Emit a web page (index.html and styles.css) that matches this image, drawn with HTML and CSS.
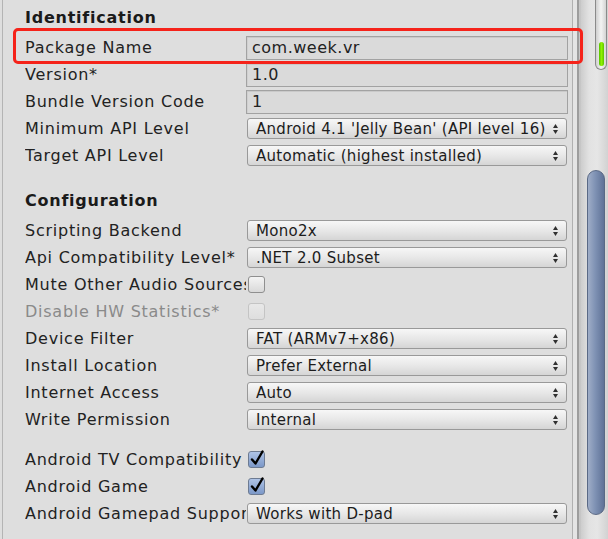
FILE: index.html
```html
<!DOCTYPE html>
<html>
<head>
<meta charset="utf-8">
<link rel="stylesheet" href="styles.css">
</head>
<body>
<div class="window">
  <div class="panel">
    <section class="group">
      <div class="heading">Identification</div>
      <div class="row"><span class="label">Package Name</span><span class="text-field">com.week.vr</span></div>
      <div class="row"><span class="label">Version*</span><span class="text-field">1.0</span></div>
      <div class="row"><span class="label">Bundle Version Code</span><span class="text-field">1</span></div>
      <div class="row"><span class="label">Minimum API Level</span><span class="popup"><span class="popup-text">Android 4.1 'Jelly Bean' (API level 16)</span><svg class="arrows" width="5" height="10" viewBox="0 0 5 10"><path d="M2.5 0L5 4H0Z M0 6H5L2.5 10Z"/></svg></span></div>
      <div class="row"><span class="label">Target API Level</span><span class="popup"><span class="popup-text">Automatic (highest installed)</span><svg class="arrows" width="5" height="10" viewBox="0 0 5 10"><path d="M2.5 0L5 4H0Z M0 6H5L2.5 10Z"/></svg></span></div>
    </section>
    <section class="group config">
      <div class="heading">Configuration</div>
      <div class="row"><span class="label">Scripting Backend</span><span class="popup"><span class="popup-text">Mono2x</span><svg class="arrows" width="5" height="10" viewBox="0 0 5 10"><path d="M2.5 0L5 4H0Z M0 6H5L2.5 10Z"/></svg></span></div>
      <div class="row"><span class="label">Api Compatibility Level*</span><span class="popup"><span class="popup-text">.NET 2.0 Subset</span><svg class="arrows" width="5" height="10" viewBox="0 0 5 10"><path d="M2.5 0L5 4H0Z M0 6H5L2.5 10Z"/></svg></span></div>
      <div class="row"><span class="label">Mute Other Audio Sources</span><span class="checkbox"></span></div>
      <div class="row disabled"><span class="label">Disable HW Statistics*</span><span class="checkbox"></span></div>
      <div class="row"><span class="label">Device Filter</span><span class="popup"><span class="popup-text">FAT (ARMv7+x86)</span><svg class="arrows" width="5" height="10" viewBox="0 0 5 10"><path d="M2.5 0L5 4H0Z M0 6H5L2.5 10Z"/></svg></span></div>
      <div class="row"><span class="label">Install Location</span><span class="popup"><span class="popup-text">Prefer External</span><svg class="arrows" width="5" height="10" viewBox="0 0 5 10"><path d="M2.5 0L5 4H0Z M0 6H5L2.5 10Z"/></svg></span></div>
      <div class="row"><span class="label">Internet Access</span><span class="popup"><span class="popup-text">Auto</span><svg class="arrows" width="5" height="10" viewBox="0 0 5 10"><path d="M2.5 0L5 4H0Z M0 6H5L2.5 10Z"/></svg></span></div>
      <div class="row"><span class="label">Write Permission</span><span class="popup"><span class="popup-text">Internal</span><svg class="arrows" width="5" height="10" viewBox="0 0 5 10"><path d="M2.5 0L5 4H0Z M0 6H5L2.5 10Z"/></svg></span></div>
    </section>
    <section class="group tv">
      <div class="row"><span class="label">Android TV Compatibility</span><span class="checkbox checked"><svg class="tick" width="16" height="18" viewBox="0 0 16 18"><path d="M3 10.5L6.5 14.5L13.5 2.5"/></svg></span></div>
      <div class="row"><span class="label">Android Game</span><span class="checkbox checked"><svg class="tick" width="16" height="18" viewBox="0 0 16 18"><path d="M3 10.5L6.5 14.5L13.5 2.5"/></svg></span></div>
      <div class="row"><span class="label">Android Gamepad Support Level</span><span class="popup"><span class="popup-text">Works with D-pad</span><svg class="arrows" width="5" height="10" viewBox="0 0 5 10"><path d="M2.5 0L5 4H0Z M0 6H5L2.5 10Z"/></svg></span></div>
    </section>
  </div>
  <div class="divider"></div>
  <div class="scrollbar">
    <div class="meter"><div class="meter-fill"></div></div>
    <div class="thumb"></div>
  </div>
  <div class="highlight"></div>
</div>
</body>
</html>
```
FILE: styles.css
```css
html, body {
  margin: 0;
  padding: 0;
}
body {
  font-family: "DejaVu Sans", "Liberation Sans", sans-serif;
  color: #222222;
}
.window {
  position: relative;
  display: flex;
  width: 608px;
  height: 539px;
  background: #dedede;
  overflow: hidden;
}
.panel {
  box-sizing: border-box;
  width: 571px;
  flex: none;
  margin-left: 2px;
  border-left: 1px solid #b4b4b4;
  border-right: 1px solid #b0b0b0;
  padding: 4px 4px 0 22px;
}
.group {
  display: flex;
  flex-direction: column;
}
.config {
  margin-top: 18px;
}
.tv {
  margin-top: 13px;
}
.heading {
  height: 27px;
  line-height: 27px;
  margin-bottom: 3px;
  font-size: 16px;
  font-weight: bold;
  letter-spacing: 0.75px;
  color: #1a1a1a;
}
.row {
  display: flex;
  align-items: center;
  height: 27px;
}
.label {
  flex: none;
  width: 221px;
  overflow: hidden;
  white-space: nowrap;
  line-height: 27px;
  font-size: 16px;
  letter-spacing: 0.75px;
}
.disabled .label {
  color: #8a8a8a;
}
.text-field {
  flex: 1;
  box-sizing: border-box;
  height: 24px;
  border: 1px solid #a2a2a2;
  background: #dadada;
  box-shadow: inset 0 1px 0 #c9c9c9, inset 1px 0 0 #d0d0d0;
  padding-left: 5px;
  line-height: 22px;
  font-size: 16px;
  letter-spacing: 0.5px;
  white-space: nowrap;
}
.popup {
  flex: 1;
  display: flex;
  align-items: center;
  box-sizing: border-box;
  height: 21px;
  margin: 0 1px;
  border: 1px solid #999999;
  border-radius: 3px;
  background: linear-gradient(#f7f7f7, #e6e6e6 55%, #d5d5d5);
  padding: 0 8px;
  font-size: 15px;
  letter-spacing: 0.3px;
  color: #1c1c1c;
}
.popup-text {
  flex: 1;
  white-space: nowrap;
  overflow: hidden;
}
.arrows {
  flex: none;
  fill: #303030;
}
.checkbox {
  position: relative;
  flex: none;
  box-sizing: border-box;
  width: 17px;
  height: 17px;
  margin-left: 2px;
  border: 1px solid #8f8f8f;
  border-radius: 3px;
  background: linear-gradient(#f4f4f4, #d9d9d9);
}
.disabled .checkbox {
  border-color: #c4c4c4;
  background: linear-gradient(#e8e8e8, #dedede);
}
.checkbox.checked {
  border-color: #6d7b92;
  background: linear-gradient(#aec3e6, #7c98c8);
}
.tick {
  position: absolute;
  left: 0;
  top: -3px;
  fill: none;
  stroke: #000;
  stroke-width: 2.4;
  stroke-linecap: round;
  stroke-linejoin: round;
}
.divider {
  flex: none;
  width: 8px;
  background: linear-gradient(to right, #e4e4e4 0 4px, #9d9d9d 4px 6px, #c6c6c6 6px 8px);
}
.scrollbar {
  flex: 1;
  display: flex;
  flex-direction: column;
  background: linear-gradient(to right, #cdcdcd, #e2e2e2 30%, #e6e6e6 60%, #d2d2d2);
}
.meter {
  box-sizing: border-box;
  width: 12px;
  height: 70px;
  margin-left: 14px;
  border: 1px solid #8a8a8a;
  border-top: none;
  border-radius: 0 0 6px 6px;
  background: linear-gradient(to right, #cfcfcf, #f3f3f3 50%, #d4d4d4);
  display: flex;
  align-items: flex-end;
  justify-content: center;
  padding-bottom: 3px;
}
.meter-fill {
  width: 5px;
  height: 24px;
  border-radius: 3px;
  background: linear-gradient(to right, #56c000, #8ef200 50%, #5cc400);
}
.thumb {
  box-sizing: border-box;
  width: 18px;
  height: 345px;
  margin-top: 100px;
  margin-left: 6px;
  border: 1px solid #5a6985;
  border-radius: 9px;
  background: linear-gradient(to right, #9fadc7, #7f92b4 45%, #5f7297);
}
.highlight {
  position: absolute;
  left: 13px;
  top: 28px;
  width: 570px;
  height: 36px;
  box-sizing: border-box;
  border: 3px solid #f5231a;
  border-radius: 5px;
}
```
